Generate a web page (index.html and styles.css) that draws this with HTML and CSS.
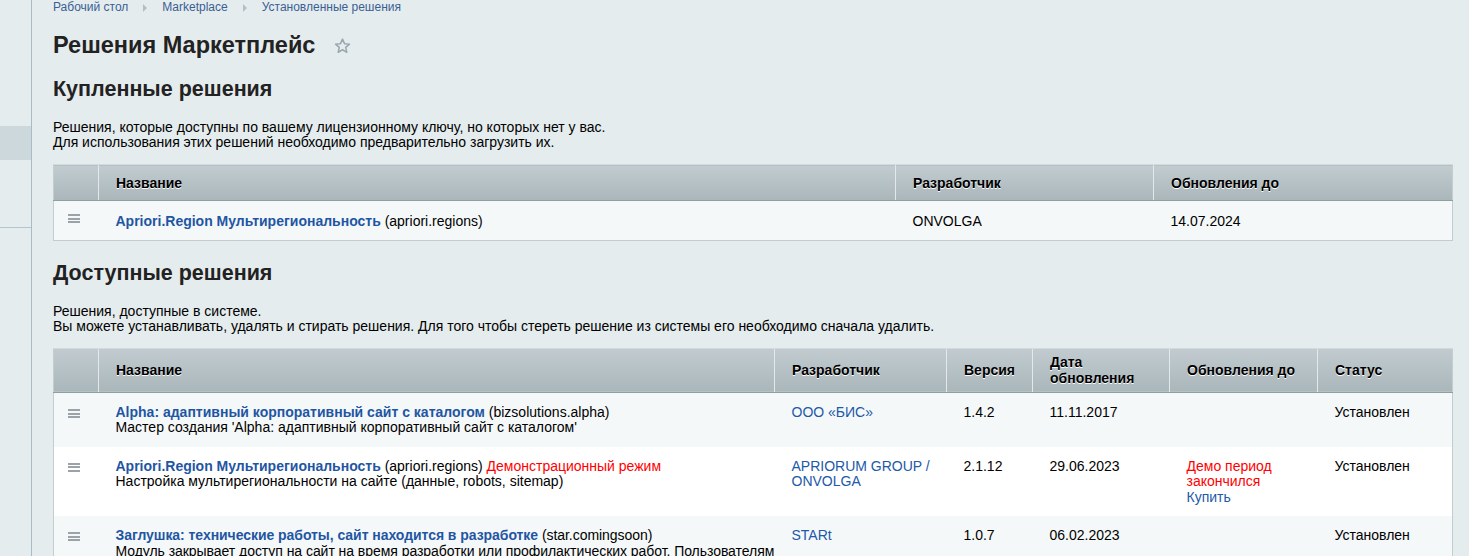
FILE: index.html
```html
<!DOCTYPE html>
<html lang="ru">
<head>
    <meta charset="UTF-8">
    <title>Решения Маркетплейс</title>
    <link rel="stylesheet" href="styles.css">
</head>
<body>
    <div class="layout">
        <div class="sidebar">
            <div class="side-item"></div>
            <div class="side-line"></div>
        </div>
        <div class="main">
            <div class="breadcrumbs">
                <a href="#">Рабочий стол</a><span class="sep"></span>
                <a href="#">Marketplace</a><span class="sep"></span>
                <a href="#">Установленные решения</a>
            </div>
            <h1 class="page-title">Решения Маркетплейс
                <svg class="star" width="19" height="18" viewBox="0 0 24 24"><path d="M12 2.8l2.7 6.1 6.6.6-5 4.4 1.5 6.5L12 17l-5.8 3.4 1.5-6.5-5-4.4 6.6-.6z" fill="none" stroke="#9aa6b0" stroke-width="2" stroke-linejoin="round"/></svg>
            </h1>

            <h2 class="section-title">Купленные решения</h2>
            <p class="note">Решения, которые доступны по вашему лицензионному ключу, но которых нет у вас.<br>Для использования этих решений необходимо предварительно загрузить их.</p>
            <table class="list">
                <thead>
                    <tr>
                        <th class="col-handle"></th>
                        <th>Название</th>
                        <th class="w-dev1">Разработчик</th>
                        <th class="w-upd1">Обновления до</th>
                    </tr>
                </thead>
                <tbody>
                    <tr class="odd single">
                        <td class="col-handle"><span class="handle"></span></td>
                        <td><a class="name" href="#">Apriori.Region Мультирегиональность</a> (apriori.regions)</td>
                        <td>ONVOLGA</td>
                        <td>14.07.2024</td>
                    </tr>
                </tbody>
            </table>

            <h2 class="section-title">Доступные решения</h2>
            <p class="note">Решения, доступные в системе.<br>Вы можете устанавливать, удалять и стирать решения. Для того чтобы стереть решение из системы его необходимо сначала удалить.</p>
            <table class="list">
                <thead>
                    <tr class="tall">
                        <th class="col-handle"></th>
                        <th>Название</th>
                        <th class="w-dev">Разработчик</th>
                        <th class="w-ver">Версия</th>
                        <th class="w-date">Дата<br>обновления</th>
                        <th class="w-upd">Обновления до</th>
                        <th class="w-status">Статус</th>
                    </tr>
                </thead>
                <tbody>
                    <tr class="odd">
                        <td class="col-handle"><span class="handle"></span></td>
                        <td><a class="name" href="#">Alpha: адаптивный корпоративный сайт с каталогом</a> (bizsolutions.alpha)<br>Мастер создания 'Alpha: адаптивный корпоративный сайт с каталогом'</td>
                        <td><a href="#">ООО «БИС»</a></td>
                        <td>1.4.2</td>
                        <td>11.11.2017</td>
                        <td></td>
                        <td>Установлен</td>
                    </tr>
                    <tr>
                        <td class="col-handle"><span class="handle"></span></td>
                        <td><a class="name" href="#">Apriori.Region Мультирегиональность</a> (apriori.regions) <span class="red">Демонстрационный режим</span><br>Настройка мультирегиональности на сайте (данные, robots, sitemap)</td>
                        <td><a href="#">APRIORUM GROUP / ONVOLGA</a></td>
                        <td>2.1.12</td>
                        <td>29.06.2023</td>
                        <td><span class="red">Демо период закончился</span><br><a href="#">Купить</a></td>
                        <td>Установлен</td>
                    </tr>
                    <tr class="odd">
                        <td class="col-handle"><span class="handle"></span></td>
                        <td class="desc"><a class="name" href="#">Заглушка: технические работы, сайт находится в разработке</a> (star.comingsoon)<br>Модуль закрывает доступ на сайт на время разработки или профилактических работ. Пользователям будет показана страница-заглушка.</td>
                        <td><a href="#">STARt</a></td>
                        <td>1.0.7</td>
                        <td>06.02.2023</td>
                        <td></td>
                        <td>Установлен</td>
                    </tr>
                </tbody>
            </table>
        </div>
    </div>
</body>
</html>
```

FILE: styles.css
```css
body {
    margin: 0;
    font-family: "Liberation Sans", Arial, sans-serif;
    font-size: 14px;
    color: #000;
    background-color: #e5ecee;
}

a {
    color: #2159a8;
    text-decoration: none;
}

.layout {
    display: flex;
    min-height: 100vh;
}

.sidebar {
    width: 31px;
    flex-shrink: 0;
    border-right: 1px solid #a9bac8;
    padding-top: 126px;
}

.side-item {
    height: 34px;
    background-color: #cdd8dd;
}

.side-line {
    margin-top: 67px;
    border-top: 1px solid #b3c3cf;
}

.main {
    flex: 1;
    padding: 0 16px 0 21px;
}

.breadcrumbs {
    font-size: 12px;
    line-height: 15px;
    display: flex;
    align-items: center;
}

.breadcrumbs a {
    color: #3a5f94;
}

.sep {
    width: 0;
    height: 0;
    border-left: 4px solid #b4bec6;
    border-top: 4px solid transparent;
    border-bottom: 4px solid transparent;
    margin: 0 15px;
}

.page-title {
    font-size: 23.5px;
    font-weight: bold;
    color: #222;
    margin: 17px 0 0;
    line-height: 26px;
    display: flex;
    align-items: center;
}

.star {
    margin-left: 18px;
    margin-top: 2px;
}

.section-title {
    font-size: 21.5px;
    font-weight: bold;
    color: #222;
    margin: 19px 0 0;
    line-height: 24px;
}

.note {
    margin: 19px 0 14px;
    line-height: 15px;
    color: #000;
}

.list {
    width: 100%;
    table-layout: fixed;
    border-collapse: collapse;
    border: 1px solid #c3cccf;
    border-top: none;
    margin-bottom: 20px;
}

.list th {
    text-align: left;
    font-weight: bold;
    color: #000;
    text-shadow: 0 1px #fff;
    height: 35px;
    padding: 0 17px;
    background: linear-gradient(#c2ccd0, #a9b6ba);
    border-top: 1px solid #d3dadc;
    border-bottom: 1px solid #8f9ea3;
    border-left: 1px solid #e3e9eb;
    line-height: 16px;
}

.list th:first-child {
    border-left: none;
}

.list tr.tall th {
    height: 43px;
}

.list td {
    vertical-align: top;
    padding: 12px 8px 11px 17px;
    line-height: 15.5px;
    background-color: #fff;
}

.list td.desc {
    padding-right: 0;
    letter-spacing: -0.05px;
}

.list tr.odd td {
    background-color: #f5f8f9;
}

.list tr.single td {
    padding-top: 13px;
    padding-bottom: 10px;
}

.list th.col-handle {
    width: 44px;
    padding: 0;
}

.list td.col-handle {
    padding: 16px 0 0 14px;
}

.handle {
    display: block;
    width: 12px;
    height: 9px;
    background-image: repeating-linear-gradient(#9ba3a8 0 2px, transparent 2px 3.5px);
}

.name {
    font-weight: bold;
    color: #1f56a3;
}

.red {
    color: #f00;
}

.w-dev1 { width: 223px; }
.w-upd1 { width: 264px; }
.w-dev { width: 137px; }
.w-ver { width: 51px; }
.w-date { width: 102px; }
.w-upd { width: 113px; }
.w-status { width: 100px; }
```
